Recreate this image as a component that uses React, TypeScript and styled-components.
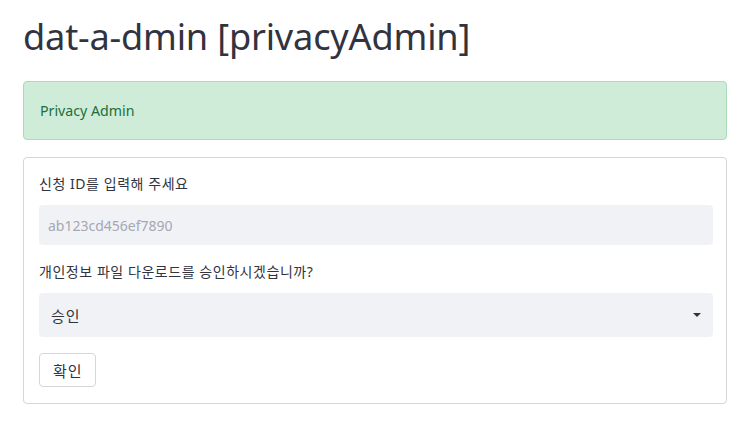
import React from "react";
import styled, { createGlobalStyle } from "styled-components";

const Global = createGlobalStyle`
  html, body { margin: 0; padding: 0; background: #ffffff; }
  body { font-family: "Noto Sans", "Noto Sans CJK KR", sans-serif; color: #31333f; }
`;

const Page = styled.div`
  padding: 0 21px 0 23px;
  display: flex;
  flex-direction: column;
`;

const Title = styled.h1`
  margin: 10px 0 0;
  font-size: 36.2px;
  font-weight: 400;
  line-height: 52px;
  color: #31333f;
  letter-spacing: -0.2px;
`;

const Alert = styled.div`
  margin-top: 19px;
  height: 59px;
  box-sizing: border-box;
  display: flex;
  align-items: center;
  padding: 0 16px;
  background: #cfecd8;
  border: 1px solid #a9dcb8;
  border-radius: 4px;
  color: #1b6f3c;
  font-size: 14.2px;
`;

const Form = styled.form`
  margin-top: 17px;
  box-sizing: border-box;
  border: 1px solid #d6d6d9;
  border-radius: 4px;
  padding: 16px 13px 16px 15px;
  display: flex;
  flex-direction: column;
`;

const Label = styled.label`
  font-size: 14px;
  line-height: 20px;
  letter-spacing: 0.55px;
  color: #31333f;
  margin-bottom: 11px;
`;

const Field = styled.div`
  height: 40px;
  background: #f0f2f6;
  border-radius: 4px;
  display: flex;
  align-items: center;
  box-sizing: border-box;
  padding: 0 9px;
  margin-bottom: 17px;
`;

const Input = styled.input`
  border: none;
  background: transparent;
  outline: none;
  width: 100%;
  font-family: "Noto Sans", sans-serif;
  font-size: 14px;
  color: #31333f;
  padding: 0;
  &::placeholder { color: #a4a8b4; }
`;

const SelectBox = styled.div`
  height: 44px;
  background: #f0f2f6;
  border-radius: 4px;
  display: flex;
  align-items: center;
  justify-content: space-between;
  box-sizing: border-box;
  padding: 0 12px 0 12px;
  margin-bottom: 16px;
  font-size: 15px;
  letter-spacing: 1px;
  color: #31333f;
`;

const Caret = styled.span`
  width: 0;
  height: 0;
  border-left: 4px solid transparent;
  border-right: 4px solid transparent;
  border-top: 4px solid #31333f;
`;

const Button = styled.button`
  align-self: flex-start;
  height: 34px;
  padding: 0 12px 0 13px;
  background: #ffffff;
  border: 1px solid #d6d6d9;
  border-radius: 4px;
  font-family: "Noto Sans", "Noto Sans CJK KR", sans-serif;
  font-size: 15px;
  letter-spacing: 1px;
  color: #31333f;
`;

export default function App() {
  return (
    <>
      <Global />
      <Page>
        <Title>dat-a-dmin [privacyAdmin]</Title>
        <Alert>Privacy Admin</Alert>
        <Form onSubmit={(e) => e.preventDefault()}>
          <Label>신청 ID를 입력해 주세요</Label>
          <Field>
            <Input placeholder="ab123cd456ef7890" />
          </Field>
          <Label>개인정보 파일 다운로드를 승인하시겠습니까?</Label>
          <SelectBox>
            <span>승인</span>
            <Caret />
          </SelectBox>
          <Button type="button">확인</Button>
        </Form>
      </Page>
    </>
  );
}
